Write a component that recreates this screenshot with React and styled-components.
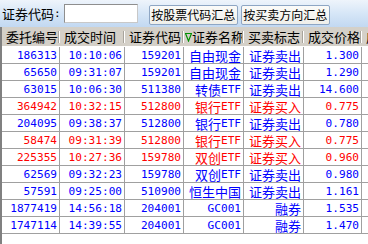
import styled, { createGlobalStyle } from "styled-components";

const GlobalStyle = createGlobalStyle`
  html, body {
    margin: 0;
    padding: 0;
    background: #ffffff;
    overflow: hidden;
  }
  #root {
    width: 368px;
    height: 244px;
    overflow: hidden;
  }
`;

const columns = [
  { title: "委托编号", width: 58 },
  { title: "成交时间", width: 65 },
  { title: "证券代码", width: 59 },
  { title: "证券名称", width: 60, sorted: true },
  { title: "买卖标志", width: 60 },
  { title: "成交价格", width: 58 },
  { title: "成交数量", width: 60 },
];

const rows = [
  ["186313", "10:10:06", "159201", "自由现金", "证券卖出", "1.300", "sell"],
  ["65650", "09:31:07", "159201", "自由现金", "证券卖出", "1.290", "sell"],
  ["63015", "10:06:30", "511380", "转债ETF", "证券卖出", "14.600", "sell"],
  ["364942", "10:32:15", "512800", "银行ETF", "证券买入", "0.775", "buy"],
  ["204095", "09:38:37", "512800", "银行ETF", "证券卖出", "0.780", "sell"],
  ["58474", "09:31:39", "512800", "银行ETF", "证券买入", "0.775", "buy"],
  ["225355", "10:27:36", "159780", "双创ETF", "证券买入", "0.960", "buy"],
  ["62569", "09:32:23", "159780", "双创ETF", "证券卖出", "0.980", "sell"],
  ["57591", "09:25:00", "510900", "恒生中国", "证券卖出", "1.161", "sell"],
  ["1877419", "14:56:18", "204001", "GC001", "融券", "1.535", "sell"],
  ["1747114", "14:39:55", "204001", "GC001", "融券", "1.470", "sell"],
];

const gridTemplate = columns.map((c) => `${c.width}px`).join(" ");

// ascii runs go to the mono font, the rest to the CJK font
const Mixed = ({ text }) =>
  text.split(/([\x00-\x7f]+)/).filter(Boolean).map((part, i) =>
    /^[\x00-\x7f]+$/.test(part) ? <Mono key={i}>{part}</Mono> : <Han key={i}>{part}</Han>
  );

const SortMark = () => (
  <svg width="7" height="10" viewBox="0 0 7 10">
    <path d="M0.5 1.5 L6.5 1.5 L3.5 9 Z" fill="none" stroke="#009000" strokeWidth="1.2" />
  </svg>
);

export default function App() {
  return (
    <>
      <GlobalStyle />
      <Window>
        <Toolbar>
          <Label>
            <Han>证券代码</Han>
            <Mono>:</Mono>
          </Label>
          <CodeInput />
          <ToolButton $first>按股票代码汇总</ToolButton>
          <ToolButton>按买卖方向汇总</ToolButton>
        </Toolbar>
        <Grid>
          <HeaderRow>
            {columns.map((c) => (
              <HeaderCell key={c.title} $sorted={c.sorted}>
                {c.sorted && <SortMark />}
                {c.title}
              </HeaderCell>
            ))}
          </HeaderRow>
          {rows.map((r, i) => (
            <Row key={i} $buy={r[6] === "buy"}>
              {r.slice(0, 6).map((v, j) => (
                <Cell key={j}>
                  <Mixed text={v} />
                </Cell>
              ))}
              <Cell />
            </Row>
          ))}
        </Grid>
      </Window>
    </>
  );
}

const Window = styled.div`
  width: 368px;
  height: 244px;
  display: flex;
  flex-direction: column;
  font-family: "Noto Sans CJK SC", sans-serif;
  font-size: 13px;
  color: #000;
`;

const Mono = styled.span`
  display: block;
  font-family: "DejaVu Sans Mono", monospace;
  font-size: 11.1px;
  line-height: 11px;
`;

const Han = styled.span`
  display: block;
  font-family: "Noto Sans CJK SC", sans-serif;
  font-size: 13px;
  line-height: 13px;
`;

const Toolbar = styled.div`
  height: 27px;
  flex: none;
  display: flex;
  align-items: flex-start;
  padding-left: 2px;
  background: linear-gradient(to bottom, #eef4fb 0%, #d6e6f7 50%, #c2d8f1 100%);
`;

const Label = styled.div`
  display: flex;
  align-items: center;
  height: 27px;
  white-space: nowrap;
`;

const CodeInput = styled.input`
  box-sizing: border-box;
  width: 74px;
  height: 19px;
  margin: 4px 0 0 3px;
  padding: 0 2px;
  border: 1px solid #8e8e8e;
  border-right-color: #c8c8c8;
  border-bottom-color: #c8c8c8;
  background: #fff;
  outline: none;
`;

const ToolButton = styled.button`
  box-sizing: border-box;
  width: 89px;
  height: 20px;
  margin: 5px 0 0 ${(p) => (p.$first ? "11px" : "3px")};
  padding: 0;
  border: 1px solid #8ea6c4;
  border-radius: 2px;
  background: linear-gradient(to bottom, #fbfbf9, #efefea);
  font-family: "Noto Sans CJK SC", sans-serif;
  font-size: 12px;
  line-height: 18px;
  color: #000;
  white-space: nowrap;
`;

const Grid = styled.div`
  flex: 1;
  border-left: 2px solid #808080;
  background: #fff;
  overflow: hidden;
`;

const HeaderRow = styled.div`
  display: grid;
  grid-template-columns: ${gridTemplate};
  height: 19px;
  background: #d4d0c8;
  border-bottom: 1px solid #ffffff;
`;

const HeaderCell = styled.div`
  position: relative;
  display: flex;
  align-items: center;
  padding-left: ${(p) => (p.$sorted ? "1px" : "4px")};
  line-height: 19px;
  white-space: nowrap;
  overflow: hidden;

  svg {
    flex: none;
    margin-top: 1px;
  }

  &::after {
    content: "";
    position: absolute;
    right: 1px;
    top: 4px;
    bottom: 3px;
    width: 1px;
    background: #a8a49c;
    box-shadow: 1px 0 0 #ffffff;
  }
`;

const Row = styled.div`
  display: grid;
  grid-template-columns: ${gridTemplate};
  height: 17px;
  color: ${(p) => (p.$buy ? "#ff0000" : "#0000ff")};
`;

const Cell = styled.div`
  box-sizing: border-box;
  height: 17px;
  display: flex;
  align-items: center;
  justify-content: flex-end;
  border-right: 1px solid #a0a0a0;
  border-bottom: 1px solid #a0a0a0;
  padding-right: 2px;
  white-space: nowrap;
  overflow: hidden;
`;
